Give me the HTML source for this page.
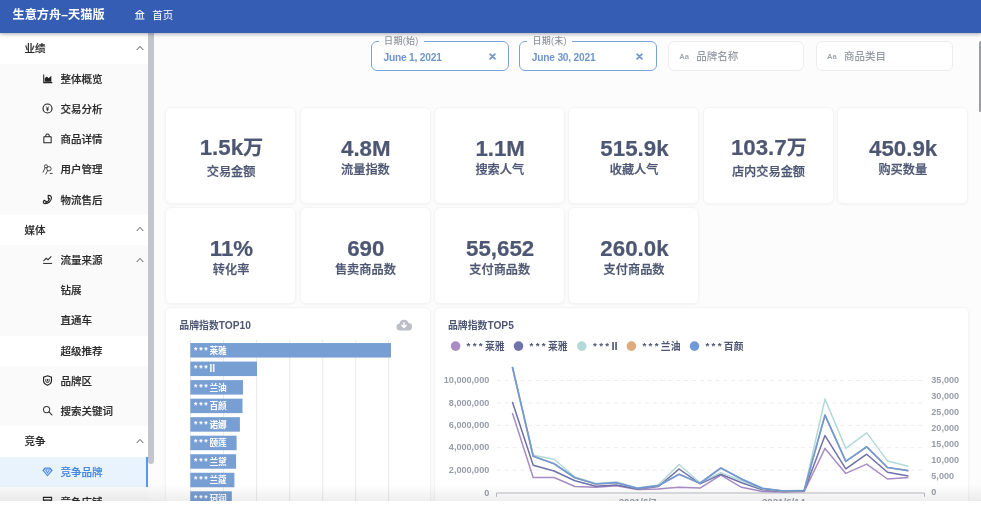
<!DOCTYPE html>
<html lang="zh-CN">
<head>
<meta charset="utf-8">
<title>生意方舟–天猫版</title>
<style>
*{box-sizing:border-box;margin:0;padding:0}
html,body{width:981px;height:526px;overflow:hidden;background:#fff}
body{font-family:"Liberation Sans", "Noto Sans CJK SC", sans-serif;position:relative;color:#262626;-webkit-font-smoothing:antialiased}
.abs{position:absolute}
#app{position:absolute;left:0;top:0;width:981px;height:501.3px;overflow:hidden;background:#fcfcfd}
#gl{position:absolute;left:0;top:0;width:981px;height:501.3px;will-change:transform;background:transparent;filter:blur(.4px)}
#hdr{position:absolute;left:0;top:0;width:981px;height:32.8px;background:#365db4;z-index:20;box-shadow:0 1px 4px rgba(0,10,30,.36)}
#hdr .ttl{position:absolute;left:12.5px;top:0;height:30px;line-height:30px;color:#fff;font-weight:700;font-size:12.2px;white-space:nowrap;letter-spacing:0}
#hdr .home{position:absolute;left:152.2px;top:0;height:30px;line-height:30px;color:#fff;font-size:10.5px;white-space:nowrap}
#side{position:absolute;left:0;top:33px;width:148.3px;height:470px;background:#fff;overflow:hidden}
.row{position:absolute;left:0;width:148.3px;height:30.22px;line-height:30.5px;font-size:10.5px;font-weight:500;color:#2b2b2b;white-space:nowrap;-webkit-text-stroke:.18px currentColor}
.row.sub{background:#fafafa}
.row.grp{background:#fff}
.row.sel{background:#e9f3fd;color:#4487e6}
.row.sel:after{content:"";position:absolute;right:0;top:0;width:1.9px;height:100%;background:#6094e6}
.row span.t{position:absolute;top:0}
.row svg.ic{position:absolute;top:9.2px;left:42px;width:11px;height:11px}
.row svg.chev{position:absolute;left:136px;top:11.7px;width:8px;height:6px}
#sbar{position:absolute;left:148.3px;top:33px;width:5.9px;height:431px;background:#c2c5cc;border-radius:0 0 3px 3px;z-index:5}
#rbar{position:absolute;left:979.2px;top:40.5px;width:3px;height:71px;background:#9a9ea9;border-radius:2px;z-index:5}
.fbox{position:absolute;top:41px;height:30px;border-radius:6px;background:#fff}
.fbox.d{border:1.7px solid #7ba3d8}
.fbox.t{border:1px solid #ececef}
.fbox .lg{position:absolute;top:-5.8px;left:6.6px;padding:0 5.5px;background:#fcfcfd;font-size:9px;letter-spacing:.3px;font-weight:500;line-height:11px;color:#8e939c;white-space:nowrap}
.fbox .v{position:absolute;left:11.5px;top:0.5px;height:27.2px;line-height:29.5px;font-size:10.2px;letter-spacing:-0.2px;font-weight:700;color:#6f96cb;white-space:nowrap}
.fbox .x{position:absolute;left:116.8px;top:11px;width:7px;height:7px}
.fbox .aa{position:absolute;left:10.6px;top:0;line-height:29px;font-size:7.6px;font-weight:700;color:#a3a7af}
.fbox .ph{position:absolute;left:27.6px;top:0;line-height:28.7px;font-size:10.5px;font-weight:500;color:#959aa4;white-space:nowrap}
.card{position:absolute;background:#fff;border:1px solid #f3f4f6;border-radius:6px;box-shadow:0 1px 3px rgba(0,0,0,.04)}
.card .val{position:absolute;left:.7px;-webkit-text-stroke:.2px #4d5672;width:100%;text-align:center;font-weight:700;font-size:22.3px;color:#4d5672;white-space:nowrap;line-height:26px;letter-spacing:0}
.card .val i{font-style:normal;font-size:20.2px;letter-spacing:0}
.card .lab{position:absolute;left:.3px;width:100%;text-align:center;font-weight:500;-webkit-text-stroke:.25px #4d5672;font-size:12.2px;color:#4d5672;white-space:nowrap;line-height:16px}
.ctitle b{font-size:10.2px;font-weight:700}
.ctitle{position:absolute;font-weight:700;font-size:9.9px;color:#4d5672;white-space:nowrap;line-height:12px}
#fade{position:absolute;left:0;top:485.3px;width:981px;height:16px;background:linear-gradient(to bottom,rgba(0,0,0,0),rgba(0,0,0,.068));z-index:30;pointer-events:none}
#bot{position:absolute;left:0;top:501.3px;width:981px;height:25px;background:#fff;z-index:40}
svg text{font-family:"Liberation Sans", "Noto Sans CJK SC", sans-serif}
</style>
</head>
<body>
<div id="app"><div id="gl">
<div id="hdr"><div class="ttl">生意方舟–天猫版</div><svg class="abs" style="left:133.8px;top:8.6px;width:11.5px;height:11.5px" viewBox="0 0 24 24" fill="none" stroke="#fff" stroke-width="2.1" stroke-linejoin="round" stroke-linecap="round"><path d="M3 9.5 L12 3 L21 9.5 Z"/><path d="M6.5 10v8.5M12 10v8.5M17.500 10v8.5M3 21h18"/></svg><div class="home">首页</div></div>
<div id="side">
<div class="row grp" style="top:0.45px"><span class="t" style="left:24.5px">业绩</span><svg class="chev" viewBox="0 0 8 6"><path d="M.7 5 4 1.400 7.300 5" fill="none" stroke="#555" stroke-width="1"/></svg></div>
<div class="row sub" style="top:30.67px"><svg class="ic" viewBox="0 0 12 12"><path d="M1.900 1.600v8.900h9.300" fill="none" stroke="#222" stroke-width="1.150"/><path d="M3 9.500V5.700l2.300-1.900 1.900 2 3-2.700v6.400z" fill="#222"/></svg><span class="t" style="left:60.5px">整体概览</span></div>
<div class="row sub" style="top:60.89px"><svg class="ic" viewBox="0 0 12 12"><circle cx="6" cy="6" r="4.900" fill="none" stroke="#222" stroke-width="1.250"/><path d="M4.600 3.800 6 5.900 7.400 3.800M4.700 6.200h2.600M4.700 7.400h2.600M6 5.900v3" fill="none" stroke="#222" stroke-width=".85"/></svg><span class="t" style="left:60.5px">交易分析</span></div>
<div class="row sub" style="top:91.11px"><svg class="ic" viewBox="0 0 12 12"><path d="M2 4.200h8v6.400h-8z" fill="none" stroke="#222" stroke-width="1.1" stroke-linejoin="round"/><path d="M4.100 4.200V3a1.900 1.900 0 0 1 3.800 0v1.200" fill="none" stroke="#222" stroke-width="1.1"/></svg><span class="t" style="left:60.5px">商品详情</span></div>
<div class="row sub" style="top:121.33px"><svg class="ic" viewBox="0 0 12 12"><circle cx="4.300" cy="2.500" r="1.700" fill="none" stroke="#333" stroke-width=".95"/><circle cx="7.600" cy="5.200" r="2.400" fill="none" stroke="#333" stroke-width=".95"/><path d="M3.400 3.900 1.200 8.900M6.100 7.200 4.200 11M8.900 10.300h2.300" fill="none" stroke="#333" stroke-width=".95" stroke-linecap="round"/></svg><span class="t" style="left:60.5px">用户管理</span></div>
<div class="row sub" style="top:151.55px"><svg class="ic" viewBox="0 0 12 12"><path d="M6.700 1.700c1.600-.8 3.700.5 3.600 2.600-.2 3.400-3.400 6.300-6.800 6.200-1.600 0-2.500-1.400-1.900-2.600l.7-1 2 .9-.3 1.100c1.800-.3 3.700-2 4.100-3.900l-1.200.1z" fill="none" stroke="#222" stroke-width="1.250" stroke-linejoin="round"/></svg><span class="t" style="left:60.5px">物流售后</span></div>
<div class="row grp" style="top:181.77px"><span class="t" style="left:24.5px">媒体</span><svg class="chev" viewBox="0 0 8 6"><path d="M.7 5 4 1.400 7.300 5" fill="none" stroke="#555" stroke-width="1"/></svg></div>
<div class="row sub" style="top:211.99px"><svg class="ic" viewBox="0 0 12 12"><path d="M1.500 7.800 4.600 4.700 6.600 6.200 10.200 2.600" fill="none" stroke="#333" stroke-width="1.150"/><path d="M1.200 10.300h9.800" fill="none" stroke="#333" stroke-width="1.150"/></svg><span class="t" style="left:60.5px">流量来源</span><svg class="chev" viewBox="0 0 8 6"><path d="M.7 5 4 1.400 7.300 5" fill="none" stroke="#555" stroke-width="1"/></svg></div>
<div class="row sub" style="top:242.21px"><span class="t" style="left:60.5px">钻展</span></div>
<div class="row sub" style="top:272.43px"><span class="t" style="left:60.5px">直通车</span></div>
<div class="row grp" style="top:302.65px"><span class="t" style="left:60.5px">超级推荐</span></div>
<div class="row sub" style="top:332.87px"><svg class="ic" viewBox="0 0 12 12"><path d="M6 .9 10.300 2.300v4.300c0 2.100-1.900 3.600-4.300 4.600C3.600 10.200 1.700 8.700 1.700 6.600V2.300z" fill="none" stroke="#222" stroke-width="1.250"/><path d="M4.200 4.300v2.200a1.800 1.800 0 0 0 3.600 0V4.300M6 4.300v2.700" fill="none" stroke="#222" stroke-width=".95"/></svg><span class="t" style="left:60.5px">品牌区</span></div>
<div class="row sub" style="top:363.09px"><svg class="ic" viewBox="0 0 12 12"><circle cx="5" cy="5" r="3.400" fill="none" stroke="#3a3a3a" stroke-width="1.150"/><path d="M7.600 7.600 10.800 10.800" fill="none" stroke="#3a3a3a" stroke-width="1.250" stroke-linecap="round"/></svg><span class="t" style="left:60.5px">搜索关键词</span></div>
<div class="row grp" style="top:393.31px"><span class="t" style="left:24.5px">竞争</span><svg class="chev" viewBox="0 0 8 6"><path d="M.7 5 4 1.400 7.300 5" fill="none" stroke="#555" stroke-width="1"/></svg></div>
<div class="row sub sel" style="top:423.53px"><svg class="ic" viewBox="0 0 12 12"><path d="M3.300 2.200h5.400l2.200 2.600L6 10.400 1.100 4.800z" fill="none" stroke="#4a8be6" stroke-width="1.300" stroke-linejoin="round"/><path d="M3.300 2.200h5.400l2.200 2.600H1.100z" fill="#4a8be6" opacity=".55"/><path d="M4 4.600 6 7.400 8 4.600" fill="none" stroke="#4a8be6" stroke-width="1.100"/></svg><span class="t" style="left:60.5px">竞争品牌</span></div>
<div class="row sub" style="top:453.75px"><svg class="ic" viewBox="0 0 12 12"><path d="M1.500 1.500h9v3h-9zM2.200 4.500v6h7.600v-6" fill="none" stroke="#222" stroke-width="1.100"/></svg><span class="t" style="left:60.5px">竞争店铺</span></div>
</div>
<div id="sbar"></div><div id="rbar"></div>
<div class="fbox d" style="left:371px;width:138px"><div class="lg">日期(始)</div><div class="v">June 1, 2021</div><svg class="x" viewBox="0 0 8 8"><path d="M1.200 1.200 6.800 6.800M6.800 1.200 1.200 6.800" stroke="#6f96cb" stroke-width="1.900" stroke-linecap="round"/></svg></div>
<div class="fbox d" style="left:519.3px;width:137.500px"><div class="lg">日期(末)</div><div class="v">June 30, 2021</div><svg class="x" style="left:115.5px" viewBox="0 0 8 8"><path d="M1.200 1.200 6.800 6.800M6.800 1.200 1.200 6.800" stroke="#6f96cb" stroke-width="1.900" stroke-linecap="round"/></svg></div>
<div class="fbox t" style="left:667.6px;width:136.700px"><div class="aa">Aa</div><div class="ph">品牌名称</div></div>
<div class="fbox t" style="left:815.5px;width:137.200px"><div class="aa">Aa</div><div class="ph">商品类目</div></div>
<div class="card" style="left:165.2px;top:107.2px;width:131.2px;height:96.7px"><div class="val" style="top:26.9px">1.5k<i>万</i></div><div class="lab" style="top:55.7px">交易金额</div></div>
<div class="card" style="left:299.5px;top:107.2px;width:131.2px;height:96.7px"><div class="val" style="top:27.9px">4.8M</div><div class="lab" style="top:53.9px">流量指数</div></div>
<div class="card" style="left:433.9px;top:107.2px;width:131.2px;height:96.7px"><div class="val" style="top:27.9px">1.1M</div><div class="lab" style="top:53.9px">搜索人气</div></div>
<div class="card" style="left:568.2px;top:107.2px;width:131.2px;height:96.7px"><div class="val" style="top:27.9px">515.9k</div><div class="lab" style="top:53.9px">收藏人气</div></div>
<div class="card" style="left:702.6px;top:107.2px;width:131.2px;height:96.7px"><div class="val" style="top:26.9px">103.7<i>万</i></div><div class="lab" style="top:55.7px">店内交易金额</div></div>
<div class="card" style="left:836.9px;top:107.2px;width:131.2px;height:96.7px"><div class="val" style="top:27.9px">450.9k</div><div class="lab" style="top:53.9px">购买数量</div></div>
<div class="card" style="left:165.2px;top:207.2px;width:131.2px;height:96.7px"><div class="val" style="top:27.9px">11%</div><div class="lab" style="top:53.9px">转化率</div></div>
<div class="card" style="left:299.5px;top:207.2px;width:131.2px;height:96.7px"><div class="val" style="top:27.9px">690</div><div class="lab" style="top:53.9px">售卖商品数</div></div>
<div class="card" style="left:433.9px;top:207.2px;width:131.2px;height:96.7px"><div class="val" style="top:27.9px">55,652</div><div class="lab" style="top:53.9px">支付商品数</div></div>
<div class="card" style="left:568.2px;top:207.2px;width:131.2px;height:96.7px"><div class="val" style="top:27.9px">260.0k</div><div class="lab" style="top:53.9px">支付商品数</div></div>
<div class="card" style="left:165.2px;top:306.700px;width:265.5px;height:230px"></div>
<div class="ctitle" style="left:179.3px;top:319.8px">品牌指数<b>TOP10</b></div>
<svg class="abs" style="left:395.7px;top:318.900px;width:16px;height:11.700px" viewBox="0 0 33 25"><path d="M8 24.500a7.500 7.500 0 0 1-1.300-14.900A10 10 0 0 1 26 8.500a8 8 0 0 1-.5 16z" fill="#bcbfc7"/><path d="M16.500 8v9.500M11.800 13.500l4.700 4.700 4.700-4.700" fill="none" stroke="#fff" stroke-width="3" stroke-linecap="round" stroke-linejoin="round"/></svg>
<svg class="abs" style="left:160px;top:335px;width:275px;height:180px" viewBox="160 335 275 180"><path d="M190.4 339.500V520" stroke="#eaebee" stroke-width="1"/><path d="M223.5 339.500V520" stroke="#eaebee" stroke-width="1"/><path d="M256.6 339.500V520" stroke="#eaebee" stroke-width="1"/><path d="M289.7 339.500V520" stroke="#eaebee" stroke-width="1"/><path d="M322.7 339.500V520" stroke="#eaebee" stroke-width="1"/><path d="M355.7 339.500V520" stroke="#eaebee" stroke-width="1"/><path d="M388.6 339.500V520" stroke="#eaebee" stroke-width="1"/><rect x="190.3" y="343.05" width="200.7" height="14.5" fill="#789fd3"/><text x="194" y="353.75" font-size="8.7" font-weight="700" fill="#fff"><tspan letter-spacing="1.75" dy="-1.1">***</tspan><tspan dy="1.1">莱雅</tspan></text><rect x="190.3" y="361.58" width="66.7" height="14.5" fill="#789fd3"/><text x="194" y="372.28" font-size="8.7" font-weight="700" fill="#fff"><tspan letter-spacing="1.75" dy="-1.1">***</tspan><tspan dy="1.1" font-size="10">II</tspan></text><rect x="190.3" y="380.11" width="52.7" height="14.5" fill="#789fd3"/><text x="194" y="390.81" font-size="8.7" font-weight="700" fill="#fff"><tspan letter-spacing="1.75" dy="-1.1">***</tspan><tspan dy="1.1">兰油</tspan></text><rect x="190.3" y="398.64" width="52.2" height="14.5" fill="#789fd3"/><text x="194" y="409.34" font-size="8.7" font-weight="700" fill="#fff"><tspan letter-spacing="1.75" dy="-1.1">***</tspan><tspan dy="1.1">百颜</tspan></text><rect x="190.3" y="417.17" width="49.6" height="14.5" fill="#789fd3"/><text x="194" y="427.87" font-size="8.7" font-weight="700" fill="#fff"><tspan letter-spacing="1.75" dy="-1.1">***</tspan><tspan dy="1.1">诺娜</tspan></text><rect x="190.3" y="435.70" width="46.3" height="14.5" fill="#789fd3"/><text x="194" y="446.40" font-size="8.7" font-weight="700" fill="#fff"><tspan letter-spacing="1.75" dy="-1.1">***</tspan><tspan dy="1.1">颐莲</tspan></text><rect x="190.3" y="454.23" width="45.8" height="14.5" fill="#789fd3"/><text x="194" y="464.93" font-size="8.7" font-weight="700" fill="#fff"><tspan letter-spacing="1.75" dy="-1.1">***</tspan><tspan dy="1.1">兰黛</tspan></text><rect x="190.3" y="472.76" width="44.1" height="14.5" fill="#789fd3"/><text x="194" y="483.46" font-size="8.7" font-weight="700" fill="#fff"><tspan letter-spacing="1.75" dy="-1.1">***</tspan><tspan dy="1.1">兰蔻</tspan></text><rect x="190.3" y="491.29" width="41.5" height="14.5" fill="#789fd3"/><text x="194" y="501.99" font-size="8.7" font-weight="700" fill="#fff"><tspan letter-spacing="1.75" dy="-1.1">***</tspan><tspan dy="1.1">珂润</tspan></text><rect x="190.3" y="509.82" width="39.2" height="14.5" fill="#789fd3"/><text x="194" y="520.52" font-size="8.7" font-weight="700" fill="#fff"><tspan letter-spacing="1.75" dy="-1.1">***</tspan><tspan dy="1.1">雪肌</tspan></text></svg>
<div class="card" style="left:433.9px;top:306.700px;width:534.8px;height:230px"></div>
<div class="ctitle" style="left:447.9px;top:319.8px">品牌指数<b>TOP5</b></div>
<svg class="abs" style="left:435px;top:335px;width:533px;height:180px" viewBox="435 335 533 180"><circle cx="455.6" cy="346.1" r="4.800" fill="#a88cc5"/><text x="466.6" y="349.7" font-size="9.800" font-weight="700" fill="#4d5672"><tspan letter-spacing="2.3" dy="-1.2">***</tspan><tspan dy="1.2">莱雅</tspan></text><circle cx="518.5" cy="346.1" r="4.800" fill="#6f71a9"/><text x="529.6" y="349.7" font-size="9.800" font-weight="700" fill="#4d5672"><tspan letter-spacing="2.3" dy="-1.2">***</tspan><tspan dy="1.2">莱雅</tspan></text><circle cx="581.8" cy="346.1" r="4.800" fill="#b3d9d8"/><text x="593.1" y="349.7" font-size="9.800" font-weight="700" fill="#4d5672"><tspan letter-spacing="2.3" dy="-1.2">***</tspan><tspan dy="1.2" font-size="11.2">II</tspan></text><circle cx="631.4" cy="346.1" r="4.800" fill="#dfaa7c"/><text x="642.5" y="349.7" font-size="9.800" font-weight="700" fill="#4d5672"><tspan letter-spacing="2.3" dy="-1.2">***</tspan><tspan dy="1.2">兰油</tspan></text><circle cx="694.5" cy="346.1" r="4.800" fill="#6e9bd8"/><text x="705.5" y="349.7" font-size="9.800" font-weight="700" fill="#4d5672"><tspan letter-spacing="2.3" dy="-1.2">***</tspan><tspan dy="1.2">百颜</tspan></text><path d="M497 380.5H924" stroke="#ecedf0" stroke-width="1" stroke-dasharray="4 3.800"/><text x="489.3" y="383.2" text-anchor="end" font-size="9.100" font-weight="700" fill="#989dab">10,000,000</text><path d="M497 402.9H924" stroke="#ecedf0" stroke-width="1" stroke-dasharray="4 3.800"/><text x="489.3" y="405.6" text-anchor="end" font-size="9.100" font-weight="700" fill="#989dab">8,000,000</text><path d="M497 425.3H924" stroke="#ecedf0" stroke-width="1" stroke-dasharray="4 3.800"/><text x="489.3" y="428.0" text-anchor="end" font-size="9.100" font-weight="700" fill="#989dab">6,000,000</text><path d="M497 447.7H924" stroke="#ecedf0" stroke-width="1" stroke-dasharray="4 3.800"/><text x="489.3" y="450.4" text-anchor="end" font-size="9.100" font-weight="700" fill="#989dab">4,000,000</text><path d="M497 470.1H924" stroke="#ecedf0" stroke-width="1" stroke-dasharray="4 3.800"/><text x="489.3" y="472.8" text-anchor="end" font-size="9.100" font-weight="700" fill="#989dab">2,000,000</text><text x="489.3" y="495.500" text-anchor="end" font-size="9.100" font-weight="700" fill="#989dab">0</text><text x="931.3" y="383.2" font-size="9.100" font-weight="700" fill="#989dab">35,000</text><text x="931.3" y="399.2" font-size="9.100" font-weight="700" fill="#989dab">30,000</text><text x="931.3" y="415.3" font-size="9.100" font-weight="700" fill="#989dab">25,000</text><text x="931.3" y="431.3" font-size="9.100" font-weight="700" fill="#989dab">20,000</text><text x="931.3" y="447.3" font-size="9.100" font-weight="700" fill="#989dab">15,000</text><text x="931.3" y="463.3" font-size="9.100" font-weight="700" fill="#989dab">10,000</text><text x="931.3" y="479.4" font-size="9.100" font-weight="700" fill="#989dab">5,000</text><text x="931.3" y="495.4" font-size="9.100" font-weight="700" fill="#989dab">0</text><path d="M496.500 496.800V493H924.500V496.800" fill="none" stroke="#b9bcc4" stroke-width="1"/><text x="637.500" y="504.500" text-anchor="middle" font-size="9.700" font-weight="700" fill="#989dab">2021/6/7</text><text x="783.500" y="504.500" text-anchor="middle" font-size="9.700" font-weight="700" fill="#989dab">2021/6/14</text><polyline points="512.4,412.9 533.2,477.5 554.1,477.5 574.9,486.5 595.8,487.3 616.6,485.7 637.4,489.4 658.3,488.9 679.1,487.3 700.0,488.1 720.8,475.1 741.6,487.3 762.5,491.4 783.3,492.0 804.2,491.5 825.0,448.4 845.8,473.4 866.7,464.1 887.5,479.0 908.4,477.6" fill="none" stroke="#a88cc5" stroke-width="1.5" stroke-linejoin="round"/><polyline points="512.4,402.0 533.2,465.3 554.1,471.0 574.9,480.8 595.8,486.2 616.6,484.9 637.4,488.9 658.3,486.5 679.1,469.0 700.0,483.7 720.8,474.3 741.6,482.7 762.5,489.7 783.3,491.5 804.2,491.0 825.0,435.6 845.8,468.9 866.7,454.2 887.5,472.3 908.4,476.0" fill="none" stroke="#6f71a9" stroke-width="1.5" stroke-linejoin="round"/><polyline points="512.4,367.0 533.2,455.2 554.1,459.2 574.9,477.0 595.8,483.5 616.6,482.0 637.4,488.0 658.3,484.9 679.1,464.5 700.0,482.7 720.8,472.6 741.6,480.8 762.5,488.9 783.3,491.0 804.2,490.2 825.0,399.1 845.8,448.4 866.7,432.9 887.5,460.9 908.4,466.2" fill="none" stroke="#b3d9d8" stroke-width="1.5" stroke-linejoin="round"/><polyline points="512.4,367.0 533.2,456.3 554.1,463.7 574.9,477.8 595.8,484.0 616.6,482.7 637.4,488.4 658.3,485.7 679.1,474.3 700.0,483.2 720.8,468.0 741.6,479.1 762.5,488.4 783.3,491.0 804.2,490.5 825.0,415.1 845.8,461.4 866.7,446.8 887.5,467.5 908.4,470.7" fill="none" stroke="#dfaa7c" stroke-width="1.5" stroke-linejoin="round"/><polyline points="512.4,367.0 533.2,456.3 554.1,463.7 574.9,477.8 595.8,484.0 616.6,482.7 637.4,488.4 658.3,485.7 679.1,474.3 700.0,483.2 720.8,468.0 741.6,479.1 762.5,488.4 783.3,491.0 804.2,490.5 825.0,415.1 845.8,461.4 866.7,446.8 887.5,467.5 908.4,470.7" fill="none" stroke="#6e9bd8" stroke-width="1.7" stroke-linejoin="round"/></svg>
<div id="fade"></div>
</div></div>
<div id="bot"></div>
</body>
</html>
